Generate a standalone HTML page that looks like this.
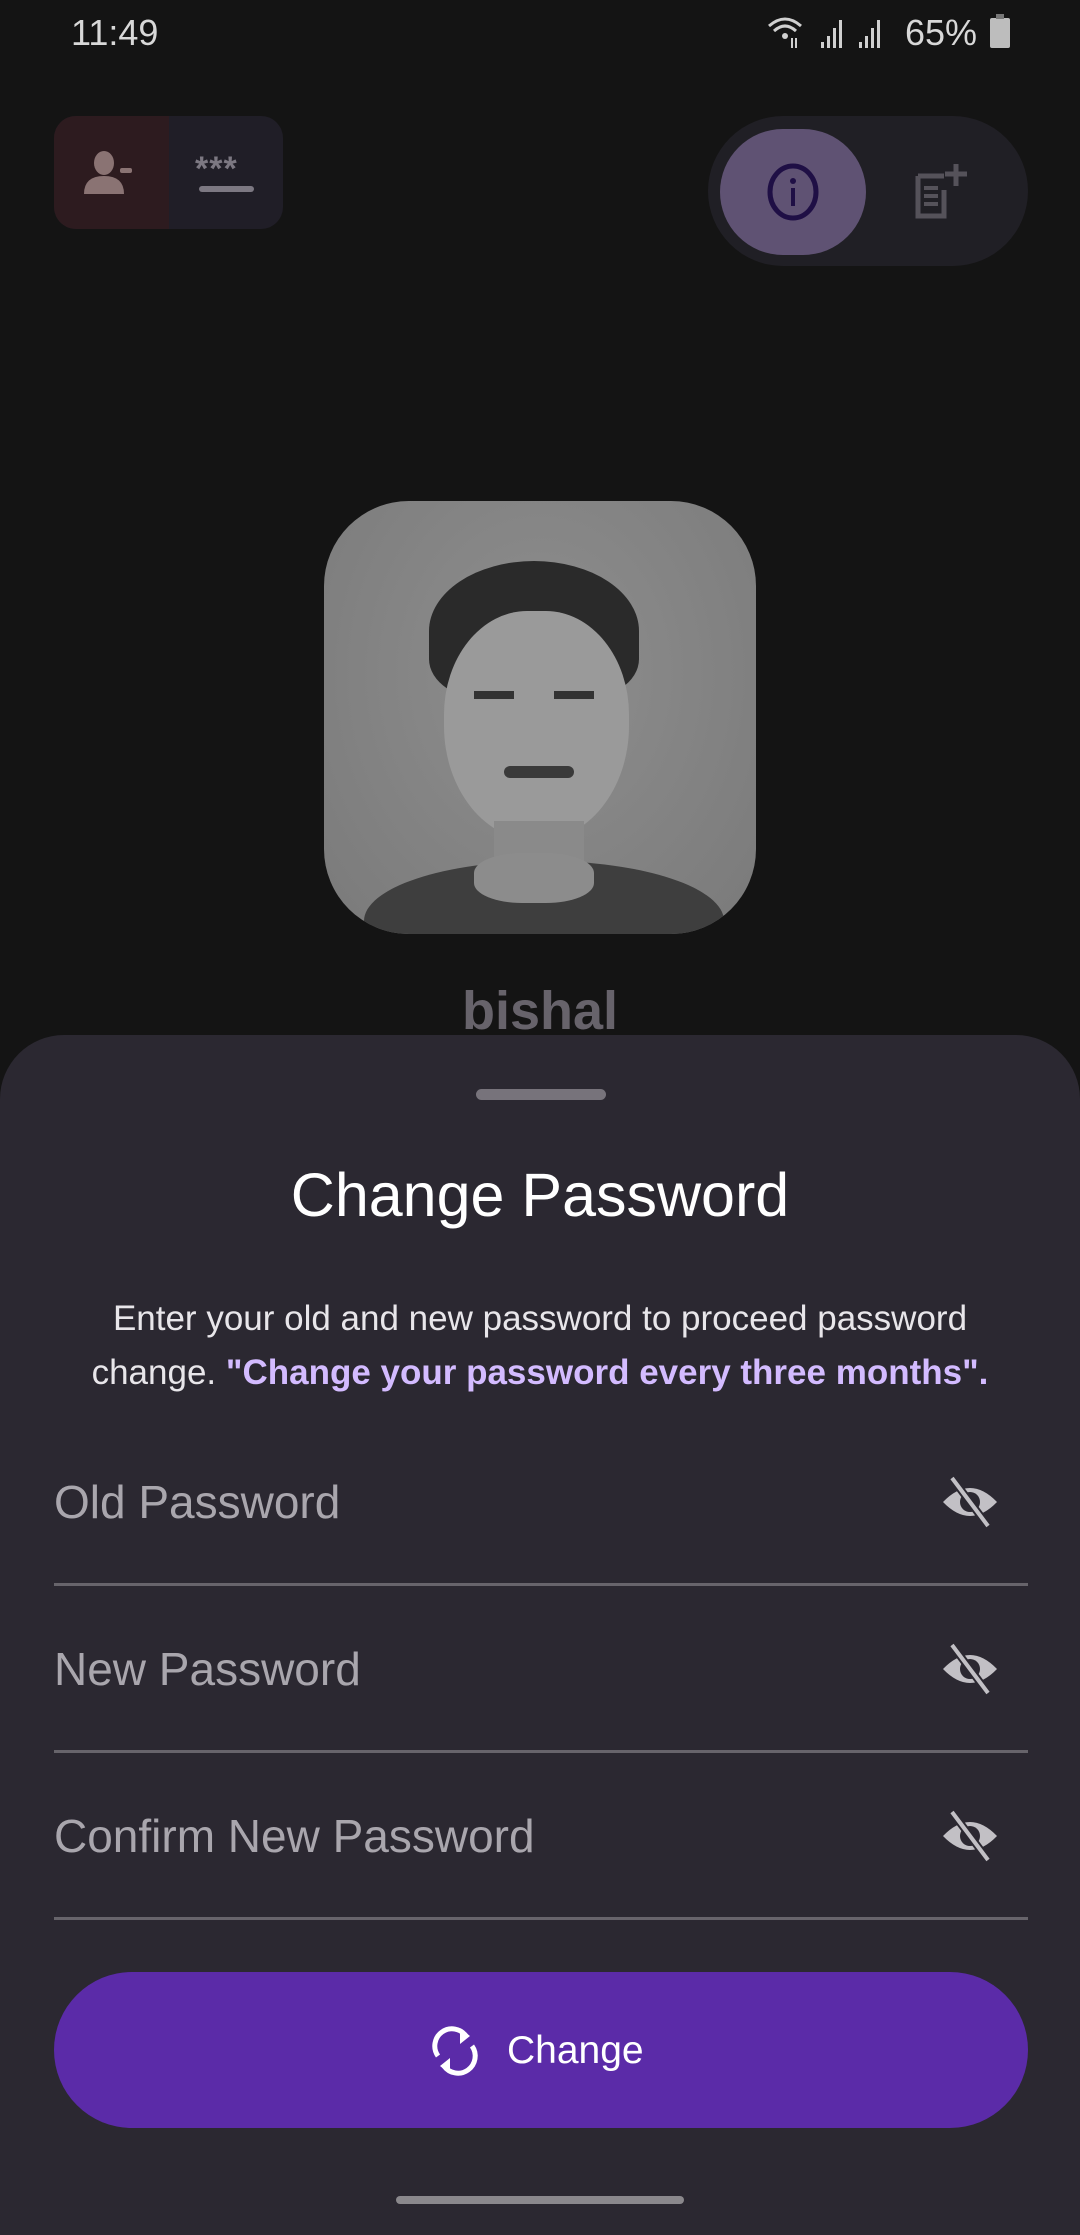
<!DOCTYPE html>
<html><head><meta charset="utf-8"><style>
*{margin:0;padding:0;box-sizing:border-box}
body{width:1080px;height:2220px;background:#141414;font-family:"Liberation Sans",sans-serif;position:relative;overflow:hidden}
.abs{position:absolute}
</style></head><body>
<div class="abs" style="left:71px;top:12px;font-size:36px;color:#d8d8d8">11:49</div>
<div class="abs" style="left:905px;top:12px;font-size:36px;color:#d8d8d8">65%</div>
<svg class="abs" style="left:765px;top:14px" width="130" height="36" viewBox="0 0 130 36">
<path d="M4 12 Q20 -2 36 12" stroke="#d0d0d0" stroke-width="3" fill="none"/><path d="M9 17 Q20 7 31 17" stroke="#d0d0d0" stroke-width="3" fill="none"/><circle cx="20" cy="22" r="3" fill="#d0d0d0"/>
<path d="M27 24v10M31 34V24" stroke="#d0d0d0" stroke-width="2"/>
<rect x="56" y="28" width="3" height="6" fill="#d0d0d0"/><rect x="62" y="22" width="3" height="12" fill="#d0d0d0"/><rect x="68" y="14" width="3" height="20" fill="#d0d0d0"/><rect x="74" y="6" width="3" height="28" fill="#d0d0d0"/>
<rect x="94" y="28" width="3" height="6" fill="#d0d0d0"/><rect x="100" y="22" width="3" height="12" fill="#d0d0d0"/><rect x="106" y="14" width="3" height="20" fill="#d0d0d0"/><rect x="112" y="6" width="3" height="28" fill="#d0d0d0"/>
</svg>
<div class="abs" style="left:990px;top:18px;width:20px;height:30px;background:#bdbdbd;border-radius:2px"></div>
<div class="abs" style="left:996px;top:14px;width:8px;height:5px;background:#777"></div>

<div class="abs" style="left:54px;top:116px;width:229px;height:113px;border-radius:22px;overflow:hidden;background:#201e27">
<div style="width:115px;height:100%;background:#2d1b1f"></div></div>
<svg class="abs" style="left:80px;top:148px" width="60" height="50"><ellipse cx="24" cy="15" rx="10" ry="12" fill="#8a7373"/><path d="M4 46 Q4 28 24 28 Q44 28 44 46Z" fill="#8a7373"/><rect x="40" y="20" width="12" height="5" rx="2" fill="#8a7373"/></svg>
<div class="abs" style="left:195px;top:150px;font-size:34px;font-weight:bold;color:#7c7882;letter-spacing:1px">***</div>
<div class="abs" style="left:199px;top:186px;width:55px;height:6px;border-radius:3px;background:#7c7882"></div>

<div class="abs" style="left:708px;top:116px;width:320px;height:150px;border-radius:75px;background:#201f25"></div>
<div class="abs" style="left:720px;top:129px;width:146px;height:126px;border-radius:63px;background:#5f5273"></div>
<svg class="abs" style="left:765px;top:162px" width="56" height="60"><ellipse cx="28" cy="30" rx="23" ry="26" stroke="#1f0f45" stroke-width="5" fill="none"/><rect x="26" y="26" width="4" height="18" fill="#1f0f45"/><circle cx="28" cy="19" r="3" fill="#1f0f45"/></svg>
<svg class="abs" style="left:912px;top:160px" width="56" height="60"><path d="M6 16h26M6 16v40h26V30" stroke="#55525a" stroke-width="5" fill="none"/><rect x="12" y="26" width="14" height="4" fill="#55525a"/><rect x="12" y="34" width="14" height="4" fill="#55525a"/><rect x="12" y="42" width="14" height="4" fill="#55525a"/><path d="M44 4v22M33 14h22" stroke="#55525a" stroke-width="5"/></svg>

<div class="abs" style="left:324px;top:501px;width:432px;height:433px;border-radius:85px;overflow:hidden;background:radial-gradient(ellipse at 50% 40%,#8e8e8e,#7a7a7a)">
<div class="abs" style="left:105px;top:60px;width:210px;height:140px;border-radius:50% 50% 30% 30%;background:#2a2a2a"></div>
<div class="abs" style="left:120px;top:110px;width:185px;height:230px;border-radius:45% 45% 50% 50%;background:#9a9a9a"></div>
<div class="abs" style="left:150px;top:190px;width:40px;height:8px;background:#333"></div>
<div class="abs" style="left:230px;top:190px;width:40px;height:8px;background:#333"></div>
<div class="abs" style="left:180px;top:265px;width:70px;height:12px;border-radius:6px;background:#3a3a3a"></div>
<div class="abs" style="left:170px;top:320px;width:90px;height:60px;background:#8a8a8a"></div>
<div class="abs" style="left:40px;top:360px;width:360px;height:120px;border-radius:50% 50% 0 0;background:#3e3e3e"></div>
<div class="abs" style="left:150px;top:352px;width:120px;height:50px;border-radius:40%;background:#8c8c8c"></div>
</div>
<div class="abs" style="left:0;width:1080px;top:980px;text-align:center;font-size:54px;font-weight:bold;color:#67636b">bishal</div>

<div class="abs" style="left:0;top:1035px;width:1080px;height:1200px;background:#2b2831;border-radius:64px 64px 0 0"></div>
<div class="abs" style="left:476px;top:1089px;width:130px;height:11px;border-radius:6px;background:#77737b"></div>
<div class="abs" style="left:0;width:1080px;top:1160px;text-align:center;font-size:61px;color:#fff">Change Password</div>
<div class="abs" style="left:50px;width:980px;top:1292px;text-align:center;font-size:35px;line-height:54px;color:#e8e6ea">Enter your old and new password to proceed password change. <b style="color:#d3bbff">"Change your password every three months".</b></div>

<div class="abs" style="left:54px;top:1475px;font-size:46px;color:#a9a6ad">Old Password</div>
<div class="abs" style="left:54px;top:1583px;width:974px;height:3px;background:#67646b"></div>
<div class="abs" style="left:54px;top:1642px;font-size:46px;color:#a9a6ad">New Password</div>
<div class="abs" style="left:54px;top:1750px;width:974px;height:3px;background:#67646b"></div>
<div class="abs" style="left:54px;top:1809px;font-size:46px;color:#a9a6ad">Confirm New Password</div>
<div class="abs" style="left:54px;top:1917px;width:974px;height:3px;background:#67646b"></div>

<svg class="abs" style="left:940px;top:1474px" width="60" height="56" viewBox="0 0 60 56"><path d="M3 28 Q30 0 57 28 Q30 56 3 28Z" fill="#c2c0c5"/><circle cx="30" cy="28" r="10" fill="#2b2831"/><path d="M12 4 L48 52" stroke="#2b2831" stroke-width="8"/><path d="M12 4 L48 52" stroke="#c2c0c5" stroke-width="4"/></svg>
<svg class="abs" style="left:940px;top:1641px" width="60" height="56" viewBox="0 0 60 56"><path d="M3 28 Q30 0 57 28 Q30 56 3 28Z" fill="#c2c0c5"/><circle cx="30" cy="28" r="10" fill="#2b2831"/><path d="M12 4 L48 52" stroke="#2b2831" stroke-width="8"/><path d="M12 4 L48 52" stroke="#c2c0c5" stroke-width="4"/></svg>
<svg class="abs" style="left:940px;top:1808px" width="60" height="56" viewBox="0 0 60 56"><path d="M3 28 Q30 0 57 28 Q30 56 3 28Z" fill="#c2c0c5"/><circle cx="30" cy="28" r="10" fill="#2b2831"/><path d="M12 4 L48 52" stroke="#2b2831" stroke-width="8"/><path d="M12 4 L48 52" stroke="#c2c0c5" stroke-width="4"/></svg>

<div class="abs" style="left:54px;top:1972px;width:974px;height:156px;border-radius:78px;background:#5b2ba8"></div>
<svg class="abs" style="left:430px;top:2024px" width="50" height="54" viewBox="0 0 50 54"><path d="M8 32 A17 17 0 0 1 36 12" stroke="#fff" stroke-width="5" fill="none"/><path d="M30 4 L40 12 L30 20Z" fill="#fff"/><path d="M42 22 A17 17 0 0 1 14 42" stroke="#fff" stroke-width="5" fill="none"/><path d="M20 34 L10 42 L20 50Z" fill="#fff"/></svg>
<div class="abs" style="left:507px;top:2029px;font-size:39px;color:#fff">Change</div>
<div class="abs" style="left:396px;top:2196px;width:288px;height:8px;border-radius:4px;background:#8a888c"></div>
</body></html>
